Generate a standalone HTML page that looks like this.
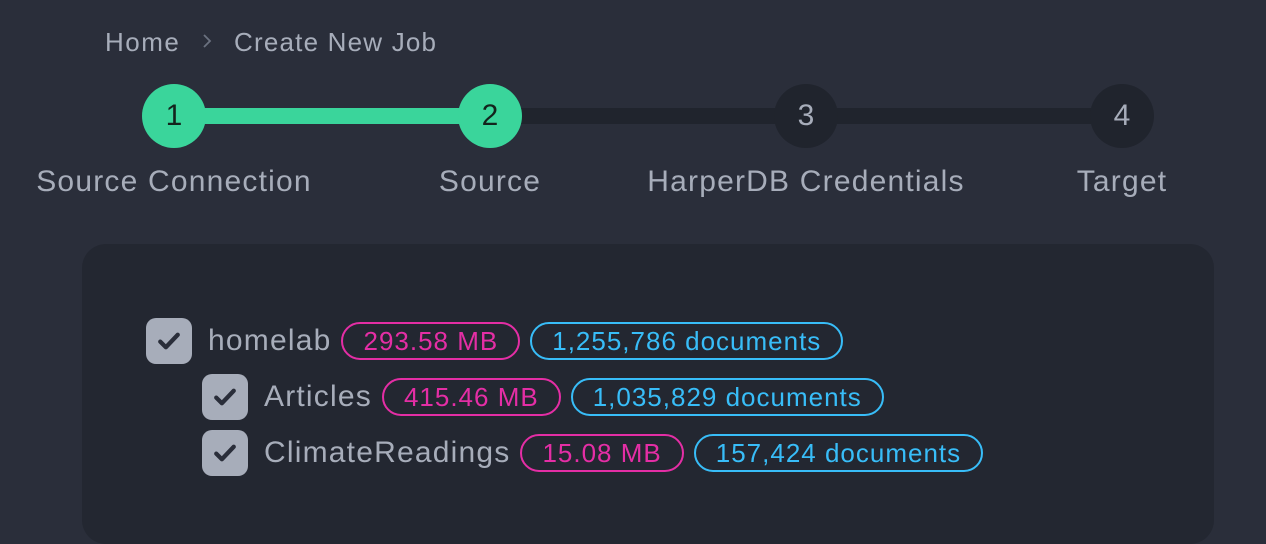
<html><head><style>
body{margin:0;width:1266px;height:484px;background:#2a2e3a;font-family:"Liberation Sans",sans-serif;color:#a7adba;overflow:hidden;position:relative}
.a{position:absolute;white-space:nowrap}
.c{position:absolute;width:64px;height:64px;border-radius:50%;top:84px;font-size:30px;line-height:64px;text-align:center}
.g{background:#3ad59b;color:#13241d}.d{background:#20242d;color:#a7adba}
.l{position:absolute;top:165px;font-size:30px;letter-spacing:1.2px;transform:translateX(-50%);white-space:nowrap}
.row{position:absolute;display:flex;align-items:center;height:48px;font-size:30px;letter-spacing:1.2px;white-space:nowrap}
.cb{width:46px;height:46px;border-radius:10px;background:#a7adba;margin-right:16px;display:flex;align-items:center;justify-content:center;flex:none}
.b{height:34px;border:2px solid;border-radius:19px;font-size:26px;letter-spacing:1px;line-height:34px;padding:0 20px;margin-left:10px}
.p{color:#e42ea5;border-color:#e42ea5}.bl{color:#38bdf8;border-color:#38bdf8}
</style></head><body>
<div class="a" style="left:105px;top:27px;font-size:26px;letter-spacing:1.5px">Home</div>
<svg class="a" style="left:200px;top:32px" width="14" height="18"><path d="M4 3l6 6-6 6" fill="none" stroke="#6b7180" stroke-width="1.8"/></svg>
<div class="a" style="left:234px;top:27px;font-size:26px;letter-spacing:1.2px">Create New Job</div>
<div class="a" style="left:174px;top:108px;width:948px;height:16px;background:#20242d"></div>
<div class="a" style="left:174px;top:108px;width:316px;height:16px;background:#3ad59b"></div>
<div class="c g" style="left:142px">1</div>
<div class="c g" style="left:458px">2</div>
<div class="c d" style="left:774px">3</div>
<div class="c d" style="left:1090px">4</div>
<div class="l" style="left:174px">Source Connection</div>
<div class="l" style="left:490px">Source</div>
<div class="l" style="left:806px">HarperDB Credentials</div>
<div class="l" style="left:1122px">Target</div>
<div class="a" style="left:82px;top:244px;width:1132px;height:300px;border-radius:24px;background:#232731"></div>
<svg width="0" height="0" style="position:absolute"><defs><symbol id="ck" viewBox="0 0 24 24"><path d="M5 12.5l4.5 4.5L19 7" fill="none" stroke="#2a2e3a" stroke-width="3.4" stroke-linecap="round" stroke-linejoin="round"/></symbol></defs></svg>
<div class="row" style="left:146px;top:317px"><div class="cb"><svg width="30" height="30"><use href="#ck"/></svg></div>homelab<span class="b p">293.58 MB</span><span class="b bl">1,255,786 documents</span></div>
<div class="row" style="left:202px;top:373px"><div class="cb"><svg width="30" height="30"><use href="#ck"/></svg></div>Articles<span class="b p">415.46 MB</span><span class="b bl">1,035,829 documents</span></div>
<div class="row" style="left:202px;top:429px"><div class="cb"><svg width="30" height="30"><use href="#ck"/></svg></div>ClimateReadings<span class="b p">15.08 MB</span><span class="b bl">157,424 documents</span></div>
</body></html>
